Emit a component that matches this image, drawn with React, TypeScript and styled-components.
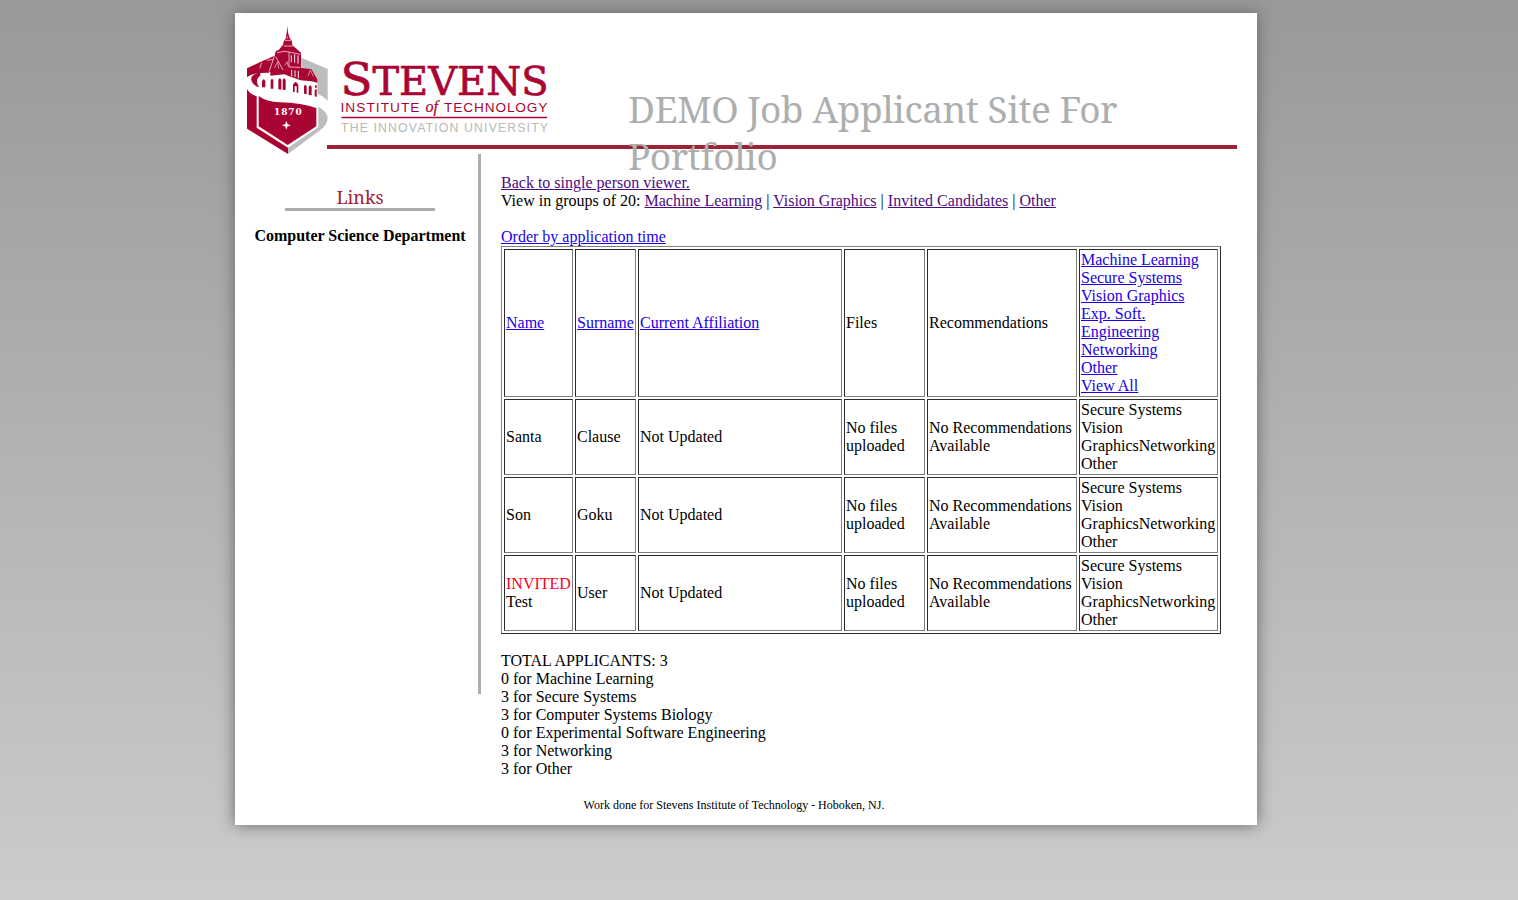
import React from 'react';
import styled, { createGlobalStyle } from 'styled-components';

const CRIMSON = '#a90533';
const SILVER = '#bbbdbf';

const GlobalStyle = createGlobalStyle`
  body {
    box-sizing: border-box;
    min-height: 100vh;
    margin: 0;
    padding: 13px 0 0 235px;
    background: linear-gradient(#999, #ccc);
    font: 16px/18px "Liberation Serif", "Times New Roman", Times, serif;
    color: #000;
  }
`;

const Page = styled.div`
  box-sizing: border-box;
  width: 1022px;
  height: 812px;
  background: #fff;
  box-shadow: 0 0 15px #666;
  display: flex;
  flex-direction: column;
`;

const Header = styled.header`
  display: flex;
  align-items: flex-start;
  height: 141px;
  padding: 0 20px 0 12px;
`;

const Shield = styled.svg`
  display: block;
  flex: none;
  width: 80px;
  height: 129px;
  margin-top: 13px;
  overflow: visible;
`;

const Banner = styled.div`
  box-sizing: border-box;
  flex: 1;
  display: flex;
  align-items: flex-start;
  height: 136px;
  border-bottom: 4px solid #9d2235;
`;

const Wordmark = styled.svg`
  display: block;
  flex: none;
  width: 210px;
  height: 80px;
  margin: 45px 0 0 13px;
  overflow: visible;
`;

const Title = styled.h1`
  width: 540px;
  margin: 72px 0 0 78px;
  font: normal 37px/47px "Noto Serif", Cambria, Caladea, serif;
  letter-spacing: -0.5px;
  color: #adafaf;
`;

const Columns = styled.div`
  display: flex;
  align-items: flex-start;
`;

const Sidebar = styled.nav`
  box-sizing: border-box;
  width: 246px;
  height: 540px;
  border-right: 3px solid #adadad;
  padding: 33px 43px 0 50px;
  display: flex;
  flex-direction: column;
  align-items: center;
`;

const SidebarHeading = styled.h2`
  box-sizing: border-box;
  width: 150px;
  height: 24px;
  margin: 0 0 16px;
  border-bottom: 3px solid #adadad;
  font: normal 18px/20px "Noto Serif", Cambria, Caladea, serif;
  text-align: center;
  color: #9d2235;
`;

const SidebarItem = styled.b`
  white-space: nowrap;
`;

const Content = styled.main`
  padding: 20px 0 0 20px;
`;

const Line = styled.div`
  min-height: 18px;
  white-space: nowrap;
`;

const Link = styled.a<{ $visited?: boolean }>`
  color: ${(p) => (p.$visited ? '#4b0b83' : '#1a00e8')};
  text-decoration: underline;
  cursor: pointer;
`;

const Table = styled.table`
  width: 720px;
  table-layout: fixed;
  border: 1px solid;
  border-color: #808080 #2c2c2c #2c2c2c #808080;
  border-spacing: 2px;
  margin-bottom: 18px;
`;

const Col = styled.col<{ $width: number }>`
  width: ${(p) => p.$width}px;
`;

const Cell = styled.td`
  border: 1px solid;
  border-color: #2c2c2c #808080 #808080 #2c2c2c;
  padding: 1px;
  vertical-align: middle;
  white-space: nowrap;
`;

const Invited = styled.div`
  color: #fb0019;
`;

const Footer = styled.footer`
  margin: 18px 24px 0 0;
  text-align: center;
  font-size: 12px;
  line-height: 18px;
`;

const columnWidths = [69, 61, 204, 81, 150, 139];
const groups = ['Machine Learning', 'Vision Graphics', 'Invited Candidates', 'Other'];
const areas = ['Machine Learning', 'Secure Systems', 'Vision Graphics', 'Exp. Soft. Engineering', 'Networking', 'Other', 'View All'];
const applicants = [
  { name: 'Santa', surname: 'Clause', invited: false },
  { name: 'Son', surname: 'Goku', invited: false },
  { name: 'Test', surname: 'User', invited: true },
];
const totals = [
  'TOTAL APPLICANTS: 3',
  '0 for Machine Learning',
  '3 for Secure Systems',
  '3 for Computer Systems Biology',
  '0 for Experimental Software Engineering',
  '3 for Networking',
  '3 for Other',
];

function ShieldMark() {
  return (
    <Shield viewBox="0 0 240 387">
      {/* silver panels */}
      <path d="M163 95 L242 129 V226 Q232 211 211 203 V160 L197 133 L163 124Z" fill={SILVER} />
      <path d="M214 242 Q238 255 242 274 Q242 297 220 312 L123 384 V365 L214 304Z" fill={SILVER} />
      {/* crimson side and inner shield */}
      <path d="M0 189 Q8 204 29 211 V305 L123 365 V384 L0 308Z" fill={CRIMSON} />
      <path d="M35 210 Q58 227 98 229 Q165 231 208 246 V301 L122 357 L35 301Z" fill={CRIMSON} />
      {/* roofs */}
      <path d="M0 127 L40 108 L83 89 L86 76 L96 71 L103 62 L108 56 L111 43 L116 38 L119 20 L121 0 L123 20 L129 38 L134 43 L136 58 L150 70 L162 80 V125 L194 130 L211 160 V170 L194 166 L161 163 L127 151 L112 145 L70 149 L66 140 L38 141 Q18 142 0 153Z" fill={CRIMSON} />
      {/* crescent at the ribbon's fold */}
      <path d="M40 139 Q6 147 14 166 Q19 179 36 184 Q22 160 40 149Z" fill={CRIMSON} />
      {/* walls seen through the roof line */}
      <path d="M66 138 H70 V186 H66Z" fill="#fff" />
      <g fill={CRIMSON}>
        <path d="M45 184 V166 Q50 153 55 166 V184Z" />
        <path d="M71 188 V163 Q75 153 79 163 V188Z M94 190 V162 Q98 151 103 162 V191Z M107 191 V163 Q111 151 116 163 V192Z" />
        <path d="M138 198 V176 Q146 160 154 176 V200 H149 V181 H143 V198Z M171 203 V181 Q175 171 179 181 V205Z M185 207 V183 Q190 172 194 183 V208Z M203 211 V192 L209 188 V213Z" />
        <path d="M204 178 H209 V185 H204Z" />
      </g>
      {/* tower windows */}
      <path d="M131 86 V106 M141 83 V108 M151 86 V111 M132 130 V149 M142 131 V151 M152 133 V155" stroke="#fff" strokeWidth="2.8" fill="none" transform="translate(2 2)" />
      {/* roof ridges, cornices */}
      <path d="M90 80 L112 76 L126 78 L160 85 M110 60 H137 M112 43 H133 M126 79 V123 L160 124 M82 91 L66 137 M44 110 L38 127 M86 92 L108 132 M60 103 L78 100" stroke="#fff" strokeWidth="2" fill="none" />
      <path d="M82 127 L92 107 L95 128 M113 118 L120 107 L124 122 M183 150 L190 132 L199 151 M121 30 V38" stroke="#fff" strokeWidth="1.6" fill="none" />
      <text x="81" y="267" fontFamily="DejaVu Serif, serif" fontWeight="bold" fontSize="27" textLength="83" fill="#fff">1870</text>
      <path d="M118 286 L121 295 L130 298 L121 301 L118 310 L115 301 L106 298 L115 295Z" fill="#fff" stroke="#fff" />
    </Shield>
  );
}

function StevensWordmark() {
  return (
    <Wordmark viewBox="340 58 210 80">
      <g fill={CRIMSON} stroke={CRIMSON} strokeWidth=".7" fontFamily="DejaVu Serif, serif">
        <text x="340.5" y="94.5" fontSize="45" textLength="32" lengthAdjust="spacingAndGlyphs">S</text>
        <text x="372.5" y="94.5" fontSize="39" textLength="176" lengthAdjust="spacingAndGlyphs">TEVENS</text>
      </g>
      <g fill={CRIMSON} fontFamily="Liberation Sans, sans-serif" fontSize="13.7">
        <text x="340.5" y="111.8" textLength="79">INSTITUTE</text>
        <text x="444" y="111.8" textLength="103.5">TECHNOLOGY</text>
      </g>
      <text x="425.5" y="111.8" fill={CRIMSON} fontFamily="Liberation Serif, serif" fontStyle="italic" fontSize="17" stroke={CRIMSON} strokeWidth=".2" textLength="12.5" lengthAdjust="spacingAndGlyphs">of</text>
      <path d="M341.500 117.500 H547" stroke={CRIMSON} strokeWidth="1.4" />
      <text x="341" y="132.3" fill="#b8b8b8" fontFamily="Liberation Sans, sans-serif" fontSize="12.3" textLength="207">THE INNOVATION UNIVERSITY</text>
    </Wordmark>
  );
}

export default function App() {
  return (
    <>
      <GlobalStyle />
      <Page>
        <Header>
          <ShieldMark />
          <Banner>
            <StevensWordmark />
            <Title>DEMO Job Applicant Site For Portfolio</Title>
          </Banner>
        </Header>
        <Columns>
          <Sidebar>
            <SidebarHeading>Links</SidebarHeading>
            <SidebarItem>Computer Science Department</SidebarItem>
          </Sidebar>
          <Content>
            <Line><Link $visited>Back to single person viewer.</Link></Line>
            <Line>
              View in groups of 20:{' '}
              {groups.map((group, i) => (
                <React.Fragment key={group}>
                  {i > 0 && ' | '}
                  <Link $visited>{group}</Link>
                </React.Fragment>
              ))}
            </Line>
            <Line />
            <Line><Link>Order by application time</Link></Line>
            <Table>
              <colgroup>
                {columnWidths.map((w, i) => <Col key={i} $width={w} />)}
              </colgroup>
              <tbody>
                <tr>
                  <Cell><Link>Name</Link></Cell>
                  <Cell><Link>Surname</Link></Cell>
                  <Cell><Link>Current Affiliation</Link></Cell>
                  <Cell>Files</Cell>
                  <Cell>Recommendations</Cell>
                  <Cell>
                    {areas.map((area) => (
                      <Line key={area}>
                        <Link>{area === 'Exp. Soft. Engineering' ? <>Exp. Soft.<br />Engineering</> : area}</Link>
                      </Line>
                    ))}
                  </Cell>
                </tr>
                {applicants.map((a) => (
                  <tr key={a.name}>
                    <Cell>{a.invited && <Invited>INVITED</Invited>}{a.name}</Cell>
                    <Cell>{a.surname}</Cell>
                    <Cell>Not Updated</Cell>
                    <Cell>No files<br />uploaded</Cell>
                    <Cell>No Recommendations<br />Available</Cell>
                    <Cell>Secure Systems<br />Vision<br />GraphicsNetworking<br />Other</Cell>
                  </tr>
                ))}
              </tbody>
            </Table>
            {totals.map((total) => <Line key={total}>{total}</Line>)}
          </Content>
        </Columns>
        <Footer>Work done for Stevens Institute of Technology - Hoboken, NJ.</Footer>
      </Page>
    </>
  );
}
